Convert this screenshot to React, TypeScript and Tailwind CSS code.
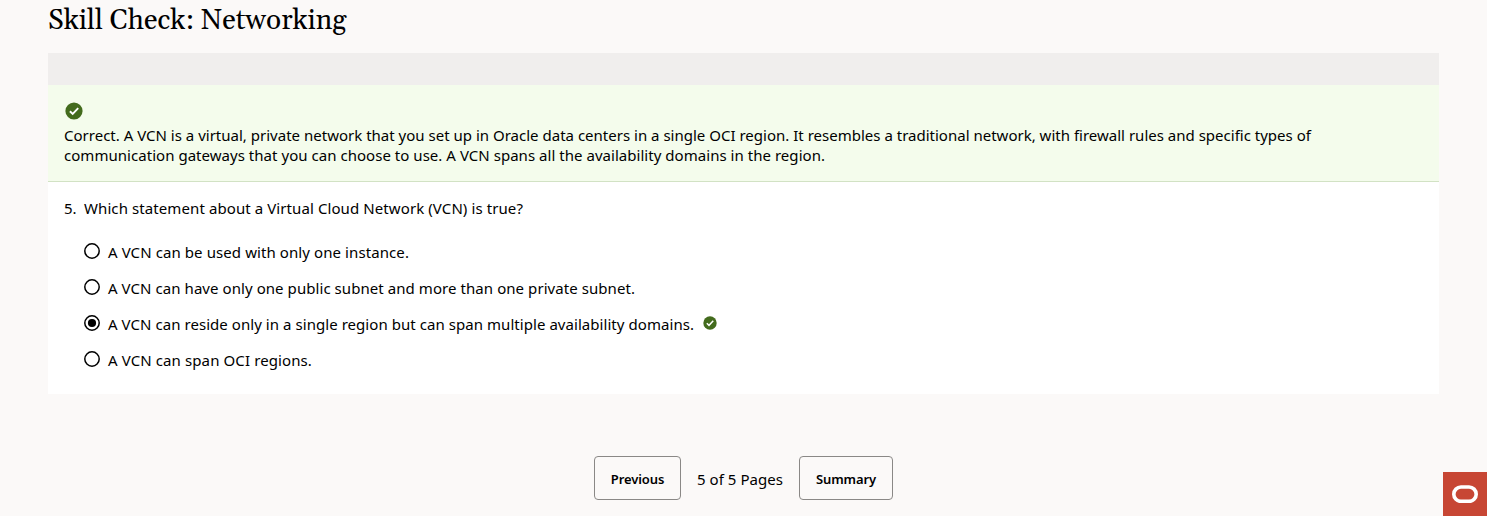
type Option = { text: string; tracking: string; selected?: boolean };

const options: Option[] = [
  { text: "A VCN can be used with only one instance.", tracking: "tracking-[0.089px]" },
  { text: "A VCN can have only one public subnet and more than one private subnet.", tracking: "tracking-[0.065px]" },
  {
    text: "A VCN can reside only in a single region but can span multiple availability domains.",
    tracking: "tracking-[0.054px]",
    selected: true,
  },
  { text: "A VCN can span OCI regions.", tracking: "tracking-[0.108px]" },
];

function CheckBadge({ className }: { className: string }) {
  return (
    <svg viewBox="0 0 18 18" className={className} aria-hidden="true">
      <circle cx="9" cy="9" r="8.6" fill="#436b1d" />
      <path d="M4.9 9.3 7.7 12 13.2 6.2" fill="none" stroke="#fff" strokeWidth="1.9" />
    </svg>
  );
}

function Radio({ selected }: { selected?: boolean }) {
  return (
    <svg viewBox="0 0 16 16" className="size-4 shrink-0" aria-hidden="true">
      <circle cx="8" cy="8" r="7.2" fill="none" stroke="#000" strokeWidth="1.5" />
      {selected && <circle cx="8" cy="8" r="4.1" fill="#000" />}
    </svg>
  );
}

export default function App() {
  return (
    <div className="flex h-[516px] flex-col overflow-hidden bg-[#fbf9f8] font-['Noto_Sans','Open_Sans',sans-serif] text-[15px] text-black">
      <h1 className="h-[53px] pl-12 pt-[3px] font-[Gelasio,Georgia,'Liberation_Serif',serif] text-[28px] leading-9 text-black">
        Skill Check: Networking
      </h1>

      <main className="mx-12 h-[341px] bg-white">
        <div className="h-8 bg-[#f0eeed]" />
        <section className="h-[97px] border-b border-[#d2e2c4] bg-[#f4fcec] px-4 pt-[17px]">
          <CheckBadge className="ml-px size-[18px]" />
          <p className="mt-[5px] whitespace-nowrap leading-5">
            <span className="tracking-[0.007px]">
              Correct. A VCN is a virtual, private network that you set up in Oracle data centers in a single OCI region. It
              resembles a traditional network, with firewall rules and specific types of
            </span>
            <br />
            <span className="tracking-[0.036px]">
              communication gateways that you can choose to use. A VCN spans all the availability domains in the region.
            </span>
          </p>
        </section>

        <section className="px-4 pt-4">
          <div className="flex leading-5">
            <span className="w-5">5.</span>
            <p className="tracking-[0.092px]">Which statement about a Virtual Cloud Network (VCN) is true?</p>
          </div>
          <ul className="ml-5 mt-6 flex flex-col gap-4">
            {options.map((option) => (
              <li key={option.text} className="flex h-5 items-start">
                <span className="pt-px">
                  <Radio selected={option.selected} />
                </span>
                <span className={`ml-2 leading-5 ${option.tracking}`}>{option.text}</span>
                {option.selected && <CheckBadge className="ml-[9px] mt-[2px] size-[14px]" />}
              </li>
            ))}
          </ul>
        </section>
      </main>

      <footer className="mt-[62px] flex h-[60px] items-start">
        <nav className="flex h-11 flex-1 items-center pl-[594px]">
          <button className="h-11 w-[87px] rounded border border-[#8a8886] pt-[3px] text-[13px] font-semibold tracking-[-0.1px]">
            Previous
          </button>
          <span className="ml-4 w-[86px] whitespace-nowrap pt-[3px] tracking-[0.045px]">5 of 5 Pages</span>
          <button className="ml-4 h-11 w-[94px] rounded border border-[#8a8886] pt-[3px] text-[13px] font-semibold tracking-[-0.1px]">
            Summary
          </button>
        </nav>
        <div className="flex size-11 items-center justify-center self-end bg-[#c74634]">
          <svg viewBox="0 0 26 18" className="h-[18px] w-[26px]" aria-hidden="true">
            <rect x="1.8" y="2" width="22.4" height="14.4" rx="7.2" fill="none" stroke="#fff" strokeWidth="3.6" />
          </svg>
        </div>
      </footer>
    </div>
  );
}
